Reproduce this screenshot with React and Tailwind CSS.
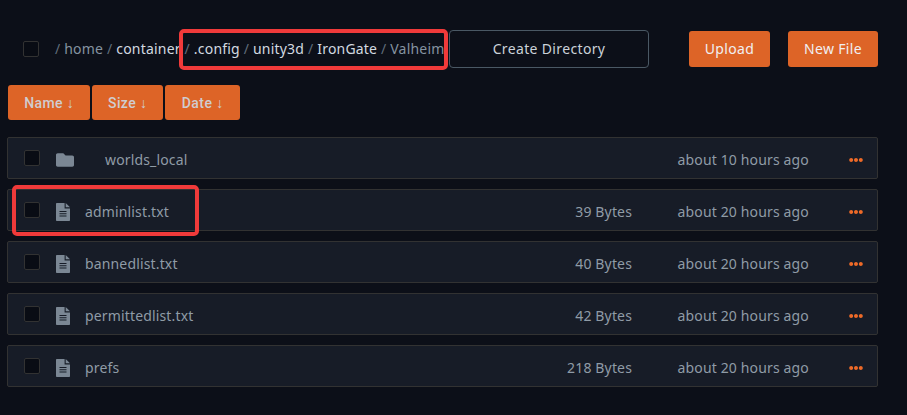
import React from "react";
import { FaEllipsisH, FaFolder } from "react-icons/fa";

const files = [
  { name: "worlds_local", folder: true, size: "", date: "about 10 hours ago" },
  { name: "adminlist.txt", size: "39 Bytes", date: "about 20 hours ago" },
  { name: "bannedlist.txt", size: "40 Bytes", date: "about 20 hours ago" },
  { name: "permittedlist.txt", size: "42 Bytes", date: "about 20 hours ago" },
  { name: "prefs", size: "218 Bytes", date: "about 20 hours ago" },
];

const crumbs = [
  { label: "home", muted: true },
  { label: "container" },
  { label: ".config" },
  { label: "unity3d" },
  { label: "IronGate" },
  { label: "Valheim", muted: true },
];

function Checkbox() {
  return <span className="block size-4 shrink-0 rounded-xs border border-[#323232] bg-[#090c14]" />;
}

function FileIcon() {
  return (
    <svg viewBox="0 0 14 18" className="h-[18px] w-[14px]" fill="currentColor">
      <path
        fillRule="evenodd"
        d="M.8 0H8.6V5.4H14V17.2a.8.8 0 0 1-.8.8H.8a.8.8 0 0 1-.8-.8V.8A.8.8 0 0 1 .8 0ZM3.5 8V9h7V8ZM3.5 10.2v1h7v-1ZM3.5 12.4v1h7v-1Z"
      />
      <path d="M9.7 0 14 4.3H9.7Z" />
    </svg>
  );
}

function SortButton({ label, width }) {
  return (
    <button className={`${width} h-[35px] rounded-[3px] bg-[#dd6427] text-center font-['Roboto',sans-serif] text-[14px] font-medium tracking-[0.4px] text-[#cfcdd0]`}>
      {label} <span className="font-['Liberation_Sans',sans-serif] tracking-normal">↓</span>
    </button>
  );
}

function FileRow({ file }) {
  return (
    <div className="flex h-[42px] items-center rounded-xs border border-[#323232] bg-[#171c27] pl-4 pr-[14px] tracking-[0.15px] text-[#8f9ba6]">
      <Checkbox />
      <span className="ml-4 mt-1 w-[18px] text-[18px] text-[#7b8794]">
        {file.folder ? <FaFolder /> : <FileIcon />}
      </span>
      <span className={`${file.folder ? "ml-[31px]" : "ml-[11px]"} mt-[3px] flex-1`}>{file.name}</span>
      <span className="mt-[3px] w-[100px] text-right">{file.size}</span>
      <span className="mt-[3px] w-[177px] text-right">{file.date}</span>
      <FaEllipsisH className="ml-10 mt-1 size-[14px] text-[#ee6a28]" />
    </div>
  );
}

export default function App() {
  return (
    <main className="relative h-[415px] w-[907px] overflow-hidden bg-[#0c0f18] pl-[7px] pr-[29px] pt-[30px] font-['Noto_Sans',sans-serif] text-[14px] leading-5">
      <header className="flex h-[38px] items-center">
        <div className="ml-4">
          <Checkbox />
        </div>
        <nav className="ml-4 flex w-[394px] whitespace-pre tracking-[0.2px] text-[#d3dae0]">
          {crumbs.map((crumb) => (
            <span key={crumb.label}>
              <span className="text-[#606d7b]">/ </span>
              <span className={crumb.muted ? "text-[#8593a0]" : ""}>{crumb.label} </span>
            </span>
          ))}
        </nav>
        <button className="h-[38px] w-[200px] rounded border border-[#4a5864] tracking-wide text-[#cbd2d9]">
          Create Directory
        </button>
        <button className="ml-10 h-9 w-[81px] rounded-[3px] bg-[#dd6427] tracking-wide text-[#f0eff2]">Upload</button>
        <button className="ml-[18px] h-9 w-[90px] rounded-[3px] bg-[#dd6427] tracking-wide text-[#f0eff2]">New File</button>
      </header>
      <div className="ml-px mt-[17px] flex gap-[2px]">
        <SortButton label="Name" width="w-[82px]" />
        <SortButton label="Size" width="w-[71px]" />
        <SortButton label="Date" width="w-[75px]" />
      </div>
      <section className="mt-[17px] flex flex-col gap-[10px]">
        {files.map((file) => (
          <FileRow key={file.name} file={file} />
        ))}
      </section>
      <div className="absolute left-[179px] top-[29px] h-[41px] w-[269px] rounded-[5px] border-4 border-[#f03a3a]" />
      <div className="absolute left-[12px] top-[185px] h-[51px] w-[187px] rounded-[5px] border-4 border-[#f03a3a]" />
    </main>
  );
}
